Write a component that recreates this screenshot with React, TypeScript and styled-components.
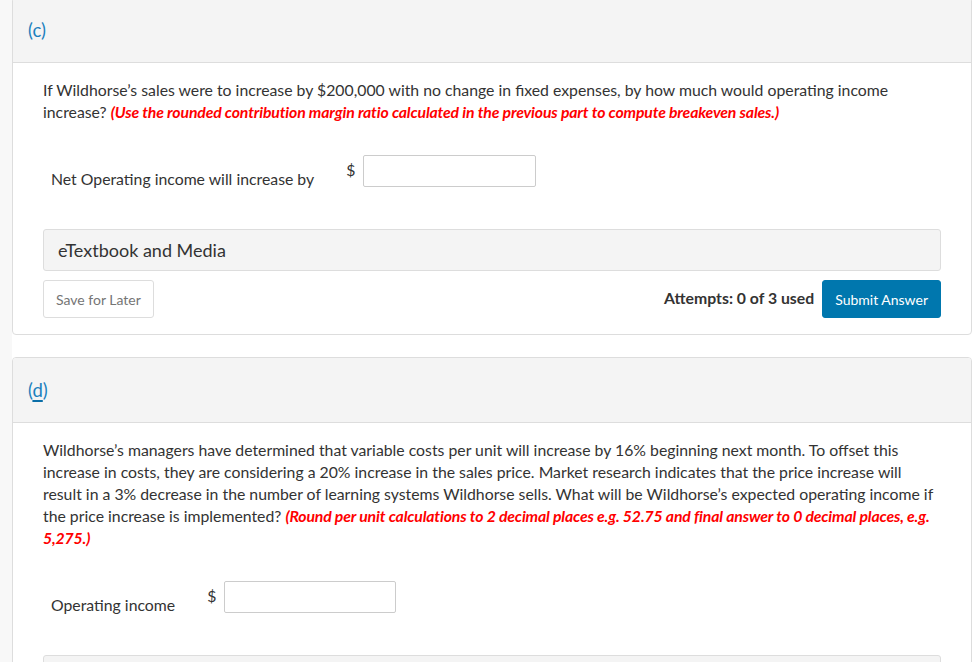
import styled, { createGlobalStyle } from "styled-components";

const GlobalStyle = createGlobalStyle`
  html, body {
    margin: 0;
    padding: 0;
    background: #ffffff;
  }
  body {
    font-family: Lato, "Open Sans", "Liberation Sans", sans-serif;
    color: #333333;
    overflow: hidden;
  }
`;

const Page = styled.div`
  display: flex;
  min-height: 662px;
`;

const Gutter = styled.div`
  width: 12px;
  flex-shrink: 0;
  background: #f8f8f8;
`;

const Main = styled.div`
  flex: 1;
  display: flex;
  flex-direction: column;
  row-gap: 22px;
  margin-top: -3px;
  padding-right: 3px;
`;

const Card = styled.section`
  border: 1px solid #dddddd;
  border-radius: 4px;
  background: #ffffff;
  overflow: hidden;
`;

const CardHeader = styled.div`
  height: 64px;
  display: flex;
  align-items: center;
  padding: 0 15px;
  background: #f4f4f4;
  border-bottom: 1px solid #dddddd;
`;

const PartLabel = styled.span`
  font-size: 18.5px;
  color: #1b7fbd;

  u {
    text-decoration-color: #0a6ea8;
    text-underline-offset: 3px;
    text-decoration-thickness: 2px;
  }
`;

const CardBody = styled.div`
  padding: 16px 30px 16px;
  display: flex;
  flex-direction: column;
`;

const Question = styled.p`
  margin: 0;
  font-size: 15.8px;
  line-height: 22px;
  color: #333333;
`;

const Hint = styled.em`
  font-weight: 700;
  color: #ff0000;
  letter-spacing: -0.15px;
`;

const AnswerRow = styled.div`
  display: flex;
  align-items: flex-start;
  margin-top: 32px;
  padding-left: 8px;
`;

const AnswerLabel = styled.span`
  font-size: 15.8px;
  line-height: 22px;
  padding-top: 13px;
  margin-right: 32px;
`;

const Currency = styled.span`
  font-size: 15.8px;
  line-height: 22px;
  padding-top: 4px;
  margin-right: 8px;
`;

const AmountInput = styled.input<{ $width: number }>`
  width: ${(p) => p.$width}px;
  height: 32px;
  box-sizing: border-box;
  border: 1px solid #cccccc;
  border-radius: 2px;
  background: #ffffff;
  font-family: inherit;
  font-size: 15px;
  padding: 0 8px;
  outline: none;
`;

const MediaBar = styled.div`
  margin-top: 39px;
  height: 42px;
  box-sizing: border-box;
  display: flex;
  align-items: center;
  padding: 0 14px;
  background: #f4f4f4;
  border: 1px solid #dddddd;
  border-radius: 3px;
  font-size: 18px;
  color: #333333;
`;

const Actions = styled.div`
  margin-top: 9px;
  display: flex;
  align-items: center;
`;

const Attempts = styled.span`
  margin-left: auto;
  margin-right: 8px;
  font-size: 15.8px;
  font-weight: 700;
  color: #333333;
  padding-bottom: 3px;
`;

const Button = styled.button<{ $primary?: boolean }>`
  height: 38px;
  box-sizing: border-box;
  padding: 0 12px;
  font-family: inherit;
  font-size: 14px;
  border-radius: 3px;
  border: 1px solid ${(p) => (p.$primary ? "#0077ae" : "#dddddd")};
  background: ${(p) => (p.$primary ? "#0077ae" : "#ffffff")};
  color: ${(p) => (p.$primary ? "#ffffff" : "#757575")};
  cursor: pointer;
`;

export default function App() {
  return (
    <>
      <GlobalStyle />
      <Page>
        <Gutter />
        <Main>
          <Card>
            <CardHeader>
              <PartLabel>(c)</PartLabel>
            </CardHeader>
            <CardBody>
              <Question>
                If Wildhorse’s sales were to increase by $200,000 with no change in fixed expenses, by how much
                would operating income increase?{" "}
                <Hint>
                  (Use the rounded contribution margin ratio calculated in the previous part to compute breakeven
                  sales.)
                </Hint>
              </Question>
              <AnswerRow>
                <AnswerLabel>Net Operating income will increase by</AnswerLabel>
                <Currency>$</Currency>
                <AmountInput $width={173} />
              </AnswerRow>
              <MediaBar>eTextbook and Media</MediaBar>
              <Actions>
                <Button>Save for Later</Button>
                <Attempts>Attempts: 0 of 3 used</Attempts>
                <Button $primary>Submit Answer</Button>
              </Actions>
            </CardBody>
          </Card>

          <Card>
            <CardHeader>
              <PartLabel>
                (<u>d</u>)
              </PartLabel>
            </CardHeader>
            <CardBody>
              <Question>
                Wildhorse’s managers have determined that variable costs per unit will increase by 16% beginning
                next month. To offset this increase in costs, they are considering a 20% increase in the sales
                price. Market research indicates that the price increase will result in a 3% decrease in the
                number of learning systems Wildhorse sells. What will be Wildhorse’s expected operating income if
                the price increase is implemented?{" "}
                <Hint>
                  (Round per unit calculations to 2 decimal places e.g. 52.75 and final answer to 0 decimal places,
                  e.g. 5,275.)
                </Hint>
              </Question>
              <AnswerRow>
                <AnswerLabel>Operating income</AnswerLabel>
                <Currency>$</Currency>
                <AmountInput $width={172} />
              </AnswerRow>
              <MediaBar>eTextbook and Media</MediaBar>
            </CardBody>
          </Card>
        </Main>
      </Page>
    </>
  );
}
